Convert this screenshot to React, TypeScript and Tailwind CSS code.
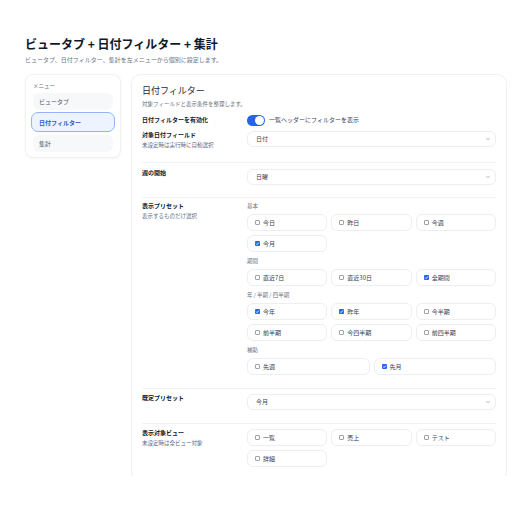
import { ChevronDown } from "lucide-react";

const presetGroups = [
  {
    label: "基本",
    cols: 3,
    items: [
      { name: "今日", on: false },
      { name: "昨日", on: false },
      { name: "今週", on: false },
      { name: "今月", on: true },
    ],
  },
  {
    label: "期間",
    cols: 3,
    items: [
      { name: "直近7日", on: false },
      { name: "直近30日", on: false },
      { name: "全期間", on: true },
    ],
  },
  {
    label: "年 / 半期 / 四半期",
    cols: 3,
    items: [
      { name: "今年", on: true },
      { name: "昨年", on: true },
      { name: "今半期", on: false },
      { name: "前半期", on: false },
      { name: "今四半期", on: false },
      { name: "前四半期", on: false },
    ],
  },
  {
    label: "補助",
    cols: 2,
    items: [
      { name: "先週", on: false },
      { name: "先月", on: true },
    ],
  },
];

const views = [
  { name: "一覧", on: false },
  { name: "売上", on: false },
  { name: "テスト", on: false },
  { name: "詳細", on: false },
];

function Check({ on }: { on: boolean }) {
  if (on) {
    return (
      <span className="grid size-[5px] shrink-0 place-items-center rounded-[1px] bg-[#2563eb]">
        <svg viewBox="0 0 10 10" className="size-[5px]">
          <path d="M2.2 5.2 4.2 7.2 7.8 3" fill="none" stroke="#fff" strokeWidth="1.8" />
        </svg>
      </span>
    );
  }
  return <span className="size-[5px] shrink-0 rounded-[1px] border-[0.5px] border-[#9ca3af] bg-white" />;
}

function Option({ name, on }: { name: string; on: boolean }) {
  return (
    <div className="flex h-[17px] items-center gap-[3px] rounded-[6px] border border-[#eceef1] bg-white px-[7px] text-[6px] text-[#374151]">
      <Check on={on} />
      <span className="leading-[8px]">{name}</span>
    </div>
  );
}

function Select({ value }: { value: string }) {
  return (
    <div className="flex h-[16px] items-center justify-between rounded-[6px] border border-[#eceef1] bg-white pl-[8px] pr-[4px] text-[6px] text-[#374151]">
      <span className="leading-[8px]">{value}</span>
      <ChevronDown className="size-[6px] text-[#6b7280]" strokeWidth={2} />
    </div>
  );
}

function Label({ title, note }: { title: string; note?: string }) {
  return (
    <div className="w-[105px] shrink-0">
      <div className="text-[6px] font-bold leading-[8px] text-[#111827]">{title}</div>
      {note && <div className="mt-[2px] text-[5.5px] leading-[8px] text-[#5b6b8a]">{note}</div>}
    </div>
  );
}

export default function App() {
  return (
    <div
      className="h-[512px] w-[512px] overflow-hidden bg-white pl-[25px] pr-[5px] pt-[37px]"
      style={{ fontFamily: '"Noto Sans CJK JP", "Noto Sans", sans-serif' }}
    >
      <h1 className="text-[12px] font-bold leading-[14px] text-[#111827]">
        ビュータブ + 日付フィルター + 集計
      </h1>
      <p className="mt-[5px] text-[6px] leading-[8px] text-[#6b7280]">
        ビュータブ、日付フィルター、集計を左メニューから個別に設定します。
      </p>

      <div className="mt-[10px] flex items-start gap-[10px]">
        <aside className="w-[96px] shrink-0 rounded-[8px] border border-[#f0f1f3] bg-white px-[7px] pb-[5px] pt-[7px] shadow-[0_1px_3px_rgba(0,0,0,0.04)]">
          <div className="text-[5.5px] leading-[8px] text-[#6b7280]">メニュー</div>
          <div className="mt-[3px] flex flex-col gap-[2px]">
            <div className="flex h-[17px] items-center rounded-[6px] bg-[#f7f8fa] px-[6px] text-[6px] text-[#4b5563]">
              ビュータブ
            </div>
            <div className="-mx-[2px] flex h-[20px] items-center rounded-[7px] border border-[#93b4f5] bg-[#eef4ff] px-[7px] text-[6px] font-bold text-[#2f55d4]">
              日付フィルター
            </div>
            <div className="mt-[1px] flex h-[17px] items-center rounded-[6px] bg-[#f7f8fa] px-[6px] text-[6px] text-[#4b5563]">
              集計
            </div>
          </div>
        </aside>

        <div className="h-[402px] flex-1 overflow-hidden">
          <section className="rounded-[10px] border border-[#f0f1f3] bg-white px-[10px] pt-[10px] shadow-[0_1px_3px_rgba(0,0,0,0.04)]">
            <h2 className="text-[9px] leading-[12px] text-[#1f2937]">日付フィルター</h2>
            <p className="mt-[3px] text-[5.5px] leading-[8px] text-[#6b7280]">対象フィールドと表示条件を整理します。</p>

            <div className="pb-[13px] pt-[6px]">
              <div className="flex h-[12px] items-center">
                <Label title="日付フィルターを有効化" />
                <div className="flex items-center gap-[4px]">
                  <span className="flex h-[11px] w-[18px] items-center justify-end rounded-full bg-[#2563eb] px-[1px]">
                    <span className="size-[9px] rounded-full bg-white" />
                  </span>
                  <span className="text-[6px] leading-[8px] text-[#374151]">一覧ヘッダーにフィルターを表示</span>
                </div>
              </div>
              <div className="mt-[5px] flex">
                <Label title="対象日付フィールド" note="未設定時は実行時に自動選択" />
                <div className="flex-1">
                  <Select value="日付" />
                </div>
              </div>
            </div>

            <div className="flex border-t border-[#f1f2f4] pb-[12px] pt-[6px]">
              <Label title="週の開始" />
              <div className="flex-1">
                <Select value="日曜" />
              </div>
            </div>

            <div className="flex border-t border-[#f1f2f4] pb-[13px] pt-[4px]">
              <Label title="表示プリセット" note="表示するものだけ選択" />
              <div className="flex flex-1 flex-col gap-[5px]">
                {presetGroups.map((g) => (
                  <div key={g.label}>
                    <div className="text-[5.5px] leading-[8px] text-[#6b7280]">{g.label}</div>
                    <div className={`mt-[4px] grid gap-[4px] ${g.cols === 2 ? "grid-cols-2" : "grid-cols-3"}`}>
                      {g.items.map((it) => (
                        <Option key={it.name} name={it.name} on={it.on} />
                      ))}
                    </div>
                  </div>
                ))}
              </div>
            </div>

            <div className="flex border-t border-[#f1f2f4] pb-[13px] pt-[5px]">
              <Label title="既定プリセット" />
              <div className="flex-1">
                <Select value="今月" />
              </div>
            </div>

            <div className="flex border-t border-[#f1f2f4] pb-[13px] pt-[5px]">
              <Label title="表示対象ビュー" note="未設定時は全ビュー対象" />
              <div className="grid flex-1 grid-cols-3 gap-[4px]">
                {views.map((v) => (
                  <Option key={v.name} name={v.name} on={v.on} />
                ))}
              </div>
            </div>
          </section>
        </div>
      </div>
    </div>
  );
}
